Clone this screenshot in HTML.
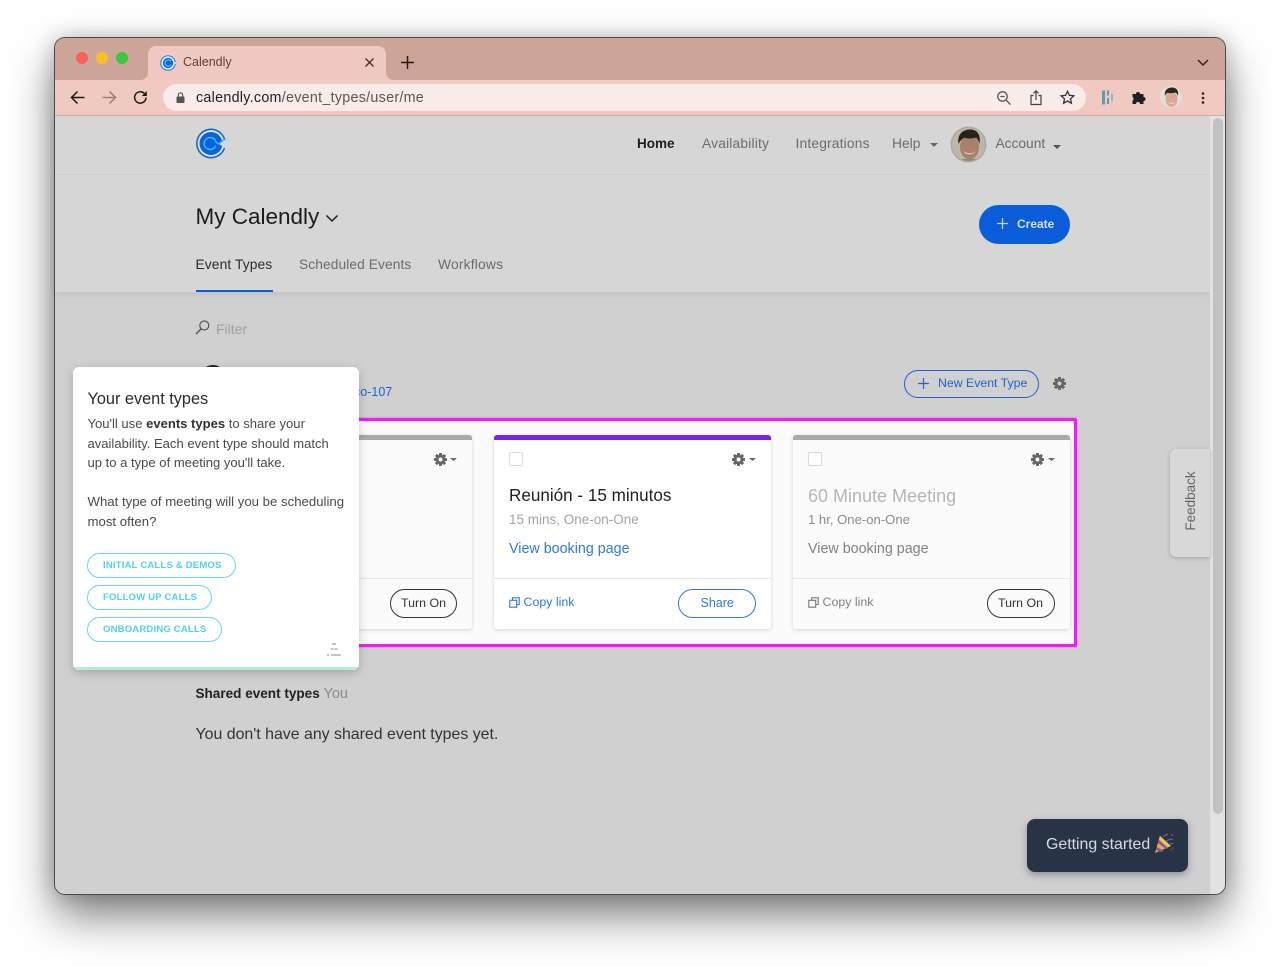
<!DOCTYPE html>
<html><head><meta charset="utf-8"><title>Calendly</title>
<style>
*{box-sizing:border-box}
html,body{margin:0;padding:0;width:1280px;height:967px;overflow:hidden;background:#fff;font-family:"Liberation Sans",sans-serif}
#win{position:absolute;left:55px;top:38px;width:1170px;height:856px;border-radius:10px;background:#d0d0d0;box-shadow:0 0 0 1px #4a4a4a,0 22px 45px rgba(0,0,0,.5),0 0 22px rgba(0,0,0,.22)}
.a{position:absolute}
.t{position:absolute;white-space:nowrap;line-height:20px}
svg{position:absolute;overflow:visible}
.card{position:absolute;top:435px;width:277px;height:194px;background:#fbfbfb;border-radius:3px;box-shadow:0 1px 4px rgba(0,0,0,.16);overflow:hidden}
.bar{position:absolute;left:0;top:0;width:100%;height:5px;background:#a9a9a9}
.rule{position:absolute;left:0;top:143px;width:100%;height:1px;background:#e6e6e6}
.cb{position:absolute;left:15px;top:17px;width:14px;height:14px;border:1px solid #d8d8d8;border-radius:2px;background:#fff}
.pill{position:absolute;border-radius:20px;background:transparent;text-align:center;white-space:nowrap}
.opt{position:absolute;left:87px;height:25px;border:1px solid #66d6f3;border-radius:13px;color:#4fd0f2;font-size:9.500px;font-weight:bold;line-height:23px;padding-left:15px;white-space:nowrap;letter-spacing:.2px;background:#fff}
</style></head><body>
<div id="win"></div>
<!-- tab strip -->
<div class="a" style="left:55px;top:38px;width:1170px;height:42px;background:#cca598;border-radius:10px 10px 0 0"></div>
<div class="a" style="left:148px;top:46px;width:238px;height:34px;background:#efc9c1;border-radius:8px 8px 0 0"></div>
<svg style="left:140px;top:72px" width="8" height="8" viewBox="0 0 8 8"><path d="M8 0v8H0c5 0 8-3 8-8z" fill="#efc9c1"/></svg>
<svg style="left:386px;top:72px" width="8" height="8" viewBox="0 0 8 8"><path d="M0 0v8h8C3 8 0 5 0 0z" fill="#efc9c1"/></svg>
<div class="a" style="left:76px;top:52px;width:12px;height:12px;border-radius:50%;background:#f8605a"></div>
<div class="a" style="left:96px;top:52px;width:12px;height:12px;border-radius:50%;background:#fbbc2e"></div>
<div class="a" style="left:116px;top:52px;width:12px;height:12px;border-radius:50%;background:#3ec53f"></div>
<svg style="left:160px;top:55px" width="16" height="16" viewBox="0 0 16 16"><circle cx="8" cy="8" r="7.200" fill="#fff" stroke="#2f7be8" stroke-width="1.200"/><circle cx="8" cy="8" r="5.200" fill="#0a63dc"/><path d="M11 6.300A3.200 3.200 0 1 0 11 9.700" fill="none" stroke="#4fd0f2" stroke-width="1.200"/><rect x="13" y="7" width="3" height="2" fill="#efc9c1"/></svg>
<div class="t" style="left:183px;top:52px;font-size:12.500px;color:#60403a">Calendly</div>
<svg style="left:365px;top:58px" width="9" height="9" viewBox="0 0 9 9"><path d="M.5.5l8 8M8.500.5l-8 8" stroke="#4a2c27" stroke-width="1.300"/></svg>
<svg style="left:401px;top:56px" width="13" height="13" viewBox="0 0 13 13"><path d="M6.500 0v13M0 6.500h13" stroke="#2a1714" stroke-width="1.500"/></svg>
<svg style="left:1197px;top:59px" width="12" height="7" viewBox="0 0 12 7"><path d="M1 1l5 5 5-5" fill="none" stroke="#3d1f1a" stroke-width="1.500"/></svg>
<!-- toolbar -->
<div class="a" style="left:55px;top:80px;width:1170px;height:36px;background:#f0c9c1;border-bottom:1px solid #d5ada5"></div>
<div class="a" style="left:163px;top:84px;width:923px;height:27px;background:#f8ebe9;border-radius:14px"></div>
<svg style="left:70px;top:90px" width="15" height="15" viewBox="0 0 15 15"><path d="M14.500 7.500H1.500M7.500 1.500l-6 6 6 6" fill="none" stroke="#1a1a1a" stroke-width="1.500"/></svg>
<svg style="left:102px;top:90px" width="15" height="15" viewBox="0 0 15 15"><path d="M.5 7.500h13M7.500 1.500l6 6-6 6" fill="none" stroke="#9c7f7a" stroke-width="1.500"/></svg>
<svg style="left:133px;top:90px" width="15" height="15" viewBox="0 0 15 15"><path d="M13 7.500A5.700 5.700 0 1 1 11.300 3.400" fill="none" stroke="#1a1a1a" stroke-width="1.500"/><path d="M13.800 1v5h-5z" fill="#1a1a1a"/></svg>
<svg style="left:176px;top:92px" width="9" height="11" viewBox="0 0 9 11"><rect x="0.500" y="4.500" width="8" height="6.500" rx="1" fill="#555"/><path d="M2.300 5V3a2.200 2.200 0 0 1 4.400 0v2" fill="none" stroke="#555" stroke-width="1.100"/></svg>
<div class="t" style="left:196px;top:88px;font-size:14.300px;letter-spacing:.28px;color:#1f1f1f">calendly.com<span style="color:#5f5452">/event_types/user/me</span></div>
<svg style="left:997px;top:91px" width="14" height="14" viewBox="0 0 14 14"><circle cx="5.500" cy="5.500" r="4.700" fill="none" stroke="#555" stroke-width="1.300"/><path d="M3.300 5.500h4.400M9 9l4.500 4.500" stroke="#555" stroke-width="1.300"/></svg>
<svg style="left:1030px;top:90px" width="12" height="15" viewBox="0 0 12 15"><path d="M3.500 5.500H1v9h10v-9H8.500M6 10V1M3.500 3.300L6 .8l2.500 2.500" fill="none" stroke="#444" stroke-width="1.200"/></svg>
<svg style="left:1060px;top:90px" width="15" height="15" viewBox="0 0 15 15"><path d="M7.500 1.300l1.900 4 4.400.5-3.300 3 .9 4.400-3.900-2.200-3.900 2.200.9-4.400-3.300-3 4.400-.5z" fill="none" stroke="#333" stroke-width="1.300"/></svg>
<svg style="left:1102px;top:90px" width="12" height="15" viewBox="0 0 12 15"><rect x="0" y="0.500" width="3" height="14" fill="#5a9db3"/><rect x="5" y="0.500" width="2" height="5" fill="#5a9db3"/><rect x="5" y="8" width="2" height="6" fill="#5a9db3"/><rect x="9" y="4" width="2" height="7" fill="#84bccb"/></svg>
<svg style="left:1132px;top:91px" width="15" height="14" viewBox="0 0 15 14"><path d="M0 4h3.500a2 2 0 0 1 4 0H11v3a2 2 0 0 1 0 4v3H7.500a2 2 0 0 0-4 0H0v-3.500a2 2 0 0 0 0-3.500z" fill="#1f1f1f" transform="translate(.5 -1)"/></svg>
<svg style="left:1160px;top:86px" width="22" height="22" viewBox="0 0 22 22"><defs><clipPath id="fs"><circle cx="11" cy="11" r="11"/></clipPath></defs><g clip-path="url(#fs)"><rect width="22" height="22" fill="#e4ded8"/><ellipse cx="11.500" cy="13" rx="6" ry="8" fill="#d9a994"/><path d="M5 10C4 4 8 1.500 12 1.500S19 4 18 10c-.5-2-1.500-3-2.500-3.500-3 1-6 .7-8 .2C6.200 7.500 5.500 8.500 5 10z" fill="#2b2421"/><path d="M8 16c2 1.600 5 1.600 7 0-1 2.500-6 2.500-7 0z" fill="#f3ebe6"/></g></svg>
<svg style="left:1201px;top:92px" width="4" height="12" viewBox="0 0 4 12"><circle cx="2" cy="1.500" r="1.300" fill="#222"/><circle cx="2" cy="6" r="1.300" fill="#222"/><circle cx="2" cy="10.500" r="1.300" fill="#222"/></svg>
<!-- page -->
<div class="a" style="left:55px;top:116px;width:1155px;height:778px;background:#d0d0d0;border-radius:0 0 0 10px;overflow:hidden"></div>
<div class="a" style="left:55px;top:116px;width:1155px;height:176px;background:#d6d6d6;box-shadow:0 2px 7px rgba(0,0,0,.08)"></div>
<div class="a" style="left:55px;top:174px;width:1155px;height:1px;background:#cdcdcd"></div>
<div class="a" style="left:1210px;top:116px;width:15px;height:778px;background:#e2e2e2;border-radius:0 0 10px 0"></div>
<div class="a" style="left:1213px;top:118px;width:10px;height:696px;background:#c2c2c2;border-radius:5px"></div>
<!-- logo -->
<svg style="left:195px;top:127px" width="33" height="33" viewBox="0 0 33 33"><circle cx="16" cy="16.500" r="15" fill="#1268d8"/><circle cx="16" cy="16.500" r="13.400" fill="#e3e3e3"/><circle cx="16" cy="16.500" r="11.500" fill="#0b63dc"/><path d="M33 9.500L25 15.500h-1l0 2 1 0 8 6z" fill="#d6d6d6"/><path d="M24 16.500c2 0 3.500-1.500 5.300-3.500l-1.200-2.500-5 4v4l5 4 1.200-2.500c-1.800-2-3.300-3.500-5.300-3.500z" fill="#0b63dc" opacity="0"/><path d="M30.600 12.700c-2.600-.6-4.300 3.300-7 3.800-1.400.2-2.200-.8-2.800-2A6 6 0 1 0 20.800 18.500" fill="none" stroke="#3fb5e6" stroke-width="1.500"/></svg>
<!-- nav -->
<div class="t" style="left:637px;top:134px;font-size:13.500px;font-weight:bold;color:#1c1c1c">Home</div>
<div class="t" style="left:702px;top:134px;font-size:13.800px;letter-spacing:.18px;color:#6c6c6c">Availability</div>
<div class="t" style="left:795.500px;top:134px;font-size:13.800px;letter-spacing:.17px;color:#6c6c6c">Integrations</div>
<div class="t" style="left:892px;top:134px;font-size:13.800px;color:#6c6c6c">Help</div>
<svg style="left:930px;top:143px" width="8" height="4" viewBox="0 0 8 4"><path d="M0 0h8L4 4z" fill="#666"/></svg>
<svg style="left:950px;top:126px" width="37" height="37" viewBox="0 0 37 37"><defs><clipPath id="fc"><circle cx="18.500" cy="18.500" r="16.500"/></clipPath></defs><circle cx="18.500" cy="18.500" r="18" fill="#a9a9a9"/><g clip-path="url(#fc)"><rect width="37" height="37" fill="#bdb7a6"/><ellipse cx="19.500" cy="21" rx="9.500" ry="12.500" fill="#a8806c"/><path d="M8.500 18C7 8 13 3.500 20 3.500S31 8 29.500 18c-.7-3-1.800-5-3.500-6.500-4.500 1.500-9 1-12 .2-2.300 1.300-4.200 3.300-5.500 6.300z" fill="#28221f"/><path d="M13.500 25c4 3 9 3 12 0-1.500 4.500-10.500 4.500-12 0z" fill="#ddd2c7"/><path d="M5 37c2-3 6-4 9-4h11c4 0 7 1 8 4z" fill="#8d8a88"/></g></svg>
<div class="t" style="left:995.500px;top:134px;font-size:13.800px;letter-spacing:-.03px;color:#6c6c6c">Account</div>
<svg style="left:1053px;top:145px" width="8" height="4" viewBox="0 0 8 4"><path d="M0 0h8L4 4z" fill="#555"/></svg>
<!-- heading -->
<div class="t" style="left:195.500px;top:204px;font-size:22.500px;line-height:26px;color:#1c1c1c">My Calendly</div>
<svg style="left:325px;top:214px" width="14" height="9" viewBox="0 0 14 9"><path d="M1.500 1.500l5.500 5.500 5.500-5.500" fill="none" stroke="#1c1c1c" stroke-width="1.500"/></svg>
<div class="a" style="left:979px;top:205px;width:91px;height:39px;background:#0b5cd8;border-radius:20px"></div>
<svg style="left:997px;top:218px" width="11" height="11" viewBox="0 0 11 11"><path d="M5.500 0v11M0 5.500h11" stroke="#c5d7f3" stroke-width="1.300"/></svg>
<div class="t" style="left:1017px;top:214px;font-size:12px;font-weight:bold;color:#d3e0f6">Create</div>
<div class="t" style="left:195.500px;top:255px;font-size:13.800px;letter-spacing:.1px;color:#2c2c2c">Event Types</div>
<div class="t" style="left:299px;top:255px;font-size:13.800px;letter-spacing:.07px;color:#6c6c6c">Scheduled Events</div>
<div class="t" style="left:438px;top:255px;font-size:13.800px;letter-spacing:.2px;color:#6c6c6c">Workflows</div>
<div class="a" style="left:195.500px;top:290px;width:77px;height:2px;background:#0b5cd8"></div>
<!-- filter -->
<svg style="left:195px;top:320px" width="15" height="15" viewBox="0 0 15 15"><circle cx="9.300" cy="5.500" r="4.500" fill="none" stroke="#555" stroke-width="1.200"/><path d="M6 9L1 14" stroke="#555" stroke-width="1.500"/></svg>
<div class="t" style="left:216px;top:319px;font-size:14px;color:#a0a0a0">Filter</div>
<!-- user row -->
<div class="a" style="left:199px;top:365px;width:28px;height:28px;border-radius:50%;background:#2a2522"></div>
<div class="t" style="left:354px;top:382px;font-size:12.500px;color:#1e63cf">co-107</div>
<div class="pill" style="left:904px;top:370px;width:135px;height:28px;border:1px solid #1e63cf"></div>
<svg style="left:918px;top:378px" width="11" height="11" viewBox="0 0 11 11"><path d="M5.500 0v11M0 5.500h11" stroke="#1e63cf" stroke-width="1.200"/></svg>
<div class="t" style="left:938px;top:373px;font-size:12.300px;color:#1e63cf">New Event Type</div>
<svg style="left:1053px;top:377px" width="13" height="13" viewBox="0 0 13 13"><g fill="#666"><circle cx="6.500" cy="6.500" r="4.800"/><g id="teeth"><rect x="5" y="0" width="3" height="13" rx=".6"/><rect x="5" y="0" width="3" height="13" rx=".6" transform="rotate(45 6.500 6.500)"/><rect x="5" y="0" width="3" height="13" rx=".6" transform="rotate(90 6.500 6.500)"/><rect x="5" y="0" width="3" height="13" rx=".6" transform="rotate(135 6.500 6.500)"/></g></g><circle cx="6.500" cy="6.500" r="2" fill="#d0d0d0"/></svg>
<!-- highlight -->
<div class="a" style="left:300px;top:418px;width:776.500px;height:229px;background:#fbfbfb;border:3px solid #f01ef5;border-radius:2px;box-shadow:0 0 2px rgba(240,30,245,.6)"></div>
<!-- card 1 -->
<div class="card" style="left:195px"><div class="bar"></div><div class="rule"></div></div>
<svg style="left:434px;top:452.500px" width="13" height="13" viewBox="0 0 13 13"><g fill="#666"><circle cx="6.500" cy="6.500" r="4.800"/><use href="#teeth"/></g><circle cx="6.500" cy="6.500" r="2" fill="#fbfbfb"/></svg>
<svg style="left:450px;top:458px" width="7" height="3" viewBox="0 0 7 3"><path d="M0 0h7L3.500 3z" fill="#666"/></svg>
<div class="pill" style="left:390px;top:589px;width:67px;height:29px;border:1px solid #333"></div>
<div class="t" style="left:401px;top:593px;font-size:12.400px;color:#333">Turn On</div>
<!-- card 2 -->
<div class="card" style="left:494px;background:#fff"><div class="bar" style="background:#7b22ea"></div><div class="rule"></div><div class="cb"></div></div>
<svg style="left:732px;top:452.500px" width="13" height="13" viewBox="0 0 13 13"><g fill="#666"><circle cx="6.500" cy="6.500" r="4.800"/><use href="#teeth"/></g><circle cx="6.500" cy="6.500" r="2" fill="#fff"/></svg>
<svg style="left:749px;top:458px" width="7" height="3" viewBox="0 0 7 3"><path d="M0 0h7L3.500 3z" fill="#666"/></svg>
<div class="t" style="left:509px;top:486px;font-size:17.100px;color:#222">Reunión - 15 minutos</div>
<div class="t" style="left:509px;top:510px;font-size:13.500px;color:#a3a3a3">15 mins, One-on-One</div>
<div class="t" style="left:509px;top:539px;font-size:14.300px;color:#2f78ea">View booking page</div>
<svg style="left:509px;top:597px" width="11" height="11" viewBox="0 0 11 11"><path d="M3.500 3V.8h6.700v6.700H8M.8 3.300h6.900v6.900H.8z" fill="none" stroke="#2f78ea" stroke-width="1.100"/></svg>
<div class="t" style="left:523.500px;top:592px;font-size:12.400px;color:#2f78ea">Copy link</div>
<div class="pill" style="left:678px;top:589px;width:78px;height:29px;border:1px solid #2f78ea"></div>
<div class="t" style="left:700.500px;top:593px;font-size:12.500px;color:#2f78ea">Share</div>
<!-- card 3 -->
<div class="card" style="left:793px"><div class="bar"></div><div class="rule"></div><div class="cb" style="left:15px"></div></div>
<svg style="left:1031px;top:452.500px" width="13" height="13" viewBox="0 0 13 13"><g fill="#666"><circle cx="6.500" cy="6.500" r="4.800"/><use href="#teeth"/></g><circle cx="6.500" cy="6.500" r="2" fill="#fbfbfb"/></svg>
<svg style="left:1048px;top:458px" width="7" height="3" viewBox="0 0 7 3"><path d="M0 0h7L3.500 3z" fill="#666"/></svg>
<div class="t" style="left:808px;top:486px;font-size:18px;color:#b5b5b5">60 Minute Meeting</div>
<div class="t" style="left:808px;top:510px;font-size:13.100px;color:#8a8a8a">1 hr, One-on-One</div>
<div class="t" style="left:808px;top:539px;font-size:14.300px;color:#808080">View booking page</div>
<svg style="left:808px;top:597px" width="11" height="11" viewBox="0 0 11 11"><path d="M3.500 3V.8h6.700v6.700H8M.8 3.300h6.900v6.900H.8z" fill="none" stroke="#777" stroke-width="1.100"/></svg>
<div class="t" style="left:822.500px;top:592px;font-size:12.400px;color:#808080">Copy link</div>
<div class="pill" style="left:987px;top:589px;width:68px;height:29px;border:1px solid #333"></div>
<div class="t" style="left:998px;top:593px;font-size:12.400px;color:#333">Turn On</div>
<!-- shared -->
<div class="t" style="left:195.500px;top:683.500px;font-size:13.550px;font-weight:bold;color:#222">Shared event types <span style="font-weight:normal;font-size:14.500px;color:#8c8c8c">You</span></div>
<div class="t" style="left:195.500px;top:724.500px;font-size:15.900px;color:#333">You don't have any shared event types yet.</div>
<!-- popup -->
<div class="a" style="left:73px;top:367px;width:286px;height:303px;background:#fff;border-radius:6px;box-shadow:0 3px 10px rgba(0,0,0,.2);overflow:hidden"><div class="a" style="left:0;bottom:0;width:100%;height:3px;background:#b5ecd9"></div></div>
<div class="t" style="left:87.500px;top:389px;font-size:16.300px;color:#2a2a2a">Your event types</div>
<div class="t" style="left:87.500px;top:413.500px;font-size:13.050px;color:#4a4a4a">You'll use <b style="color:#333">events types</b> to share your</div>
<div class="t" style="left:87.500px;top:433.500px;font-size:13.050px;color:#4a4a4a">availability. Each event type should match</div>
<div class="t" style="left:87.500px;top:452.500px;font-size:13.050px;color:#4a4a4a">up to a type of meeting you'll take.</div>
<div class="t" style="left:87.500px;top:492px;font-size:13.200px;color:#4a4a4a">What type of meeting will you be scheduling</div>
<div class="t" style="left:87.500px;top:511.500px;font-size:13.200px;color:#4a4a4a">most often?</div>
<div class="opt" style="top:552.500px;width:149px">INITIAL CALLS &amp; DEMOS</div>
<div class="opt" style="top:585px;width:125px">FOLLOW UP CALLS</div>
<div class="opt" style="top:617px;width:135px">ONBOARDING CALLS</div>
<svg style="left:327px;top:643px" width="14" height="13" viewBox="0 0 14 13"><g fill="#c4c4c4"><rect x="5" y="0" width="4" height="2"/><rect x="3.500" y="5" width="3" height="2"/><rect x="7.500" y="5" width="3" height="2"/><rect x="0" y="11" width="2" height="2"/><rect x="4" y="11" width="10" height="2"/></g></svg>
<!-- feedback -->
<div class="a" style="left:1170px;top:449px;width:40px;height:108px;background:#d8d8d8;border-radius:6px 0 0 6px;box-shadow:0 1px 4px rgba(0,0,0,.22)"></div>
<div class="t" style="left:1156px;top:491px;width:70px;text-align:center;font-size:13.500px;color:#666;transform:rotate(-90deg)">Feedback</div>
<!-- getting started -->
<div class="a" style="left:1027px;top:819px;width:161px;height:53px;background:#283345;border-radius:8px;box-shadow:0 3px 8px rgba(0,0,0,.3)"></div>
<div class="t" style="left:1046px;top:835px;font-size:15.900px;color:#d7dadf">Getting started</div>
<svg style="left:1153px;top:833px" width="22" height="22" viewBox="0 0 22 22"><path d="M2 20L7 3l11 10z" fill="#e2b432"/><path d="M4 14l7 4-3 1-5-2zM6 7l9 8-2 1-8-6z" fill="#8a52b5"/><path d="M7 3l11 10-3 1L6 6z" fill="#f0c94e"/><path d="M10 4c1-2 3-2 5-3M13 8c2-1 4-2 7-2M17 10l3 1" fill="none" stroke="#3c7fc2" stroke-width="1"/><circle cx="13" cy="2" r="1" fill="#b33a5a"/><circle cx="19" cy="2" r="1" fill="#b33a5a"/><circle cx="20" cy="15" r=".8" fill="#b33a5a"/><circle cx="18" cy="17" r=".7" fill="#b33a5a"/></svg>
</body></html>
